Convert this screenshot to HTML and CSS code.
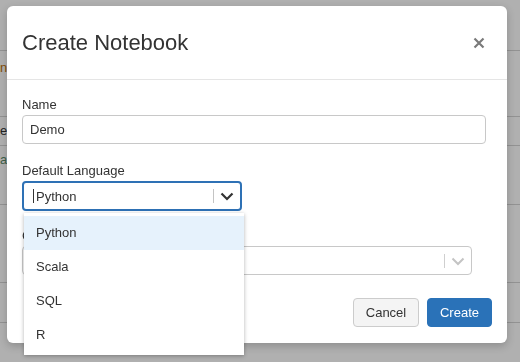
FILE: index.html
```html
<!DOCTYPE html>
<html lang="en">
<head>
    <meta charset="UTF-8">
    <meta name="viewport" content="width=device-width, initial-scale=1.0">
    <title>Create Notebook</title>
    <link rel="stylesheet" href="styles.css">
</head>
<body>
    <div class="page">
        <div class="page-row row-head"></div>
        <div class="page-row row-a"><span class="cell cell-orange">n</span></div>
        <div class="page-row row-b"><span class="cell">e</span></div>
        <div class="page-row row-c"><span class="cell cell-green">a</span></div>
        <div class="page-row row-d"></div>
        <div class="page-row row-e"></div>
    </div>
    <div class="backdrop"></div>

    <div class="modal">
        <div class="modal-header">
            <h4 class="modal-title">Create Notebook</h4>
            <svg class="close" width="12" height="12" viewBox="0 0 12 12">
                <path d="M1.5 1.5 L10.5 10.5 M10.5 1.5 L1.5 10.5" stroke="#7a7a7a" stroke-width="2.2"/>
            </svg>
        </div>

        <div class="modal-body">
            <div class="form-group group-name">
                <div class="label">Name</div>
                <div class="input">Demo</div>
            </div>

            <div class="form-group group-lang">
                <div class="label">Default Language</div>
                <div class="select select-focus">
                    <span class="select-value"><span class="caret-line"></span>Python</span>
                    <span class="select-sep"></span>
                    <svg class="chevron" width="14" height="10" viewBox="0 0 14 10">
                        <path d="M1.5 2.5 L7 8 L12.5 2.5" fill="none" stroke="#333" stroke-width="2.2"/>
                    </svg>
                </div>
                <div class="menu">
                    <div class="menu-item active">Python</div>
                    <div class="menu-item">Scala</div>
                    <div class="menu-item">SQL</div>
                    <div class="menu-item">R</div>
                </div>
            </div>

            <div class="form-group group-cluster">
                <div class="label">Cluster</div>
                <div class="select select-wide">
                    <span class="select-value"></span>
                    <span class="select-sep light"></span>
                    <svg class="chevron" width="14" height="10" viewBox="0 0 14 10">
                        <path d="M1.5 2.5 L7 8 L12.5 2.5" fill="none" stroke="#c4c4c4" stroke-width="2"/>
                    </svg>
                </div>
            </div>
        </div>

        <div class="modal-footer">
            <button class="btn btn-default">Cancel</button>
            <button class="btn btn-primary">Create</button>
        </div>
    </div>
</body>
</html>
```

FILE: styles.css
```css
body {
    margin: 0;
    font-family: "Liberation Sans", Arial, sans-serif;
    font-size: 13px;
    color: #333;
    background-color: #fff;
    overflow: hidden;
}

/* page behind the dialog */
.page {
    width: 520px;
    height: 362px;
}

.page-row {
    border-bottom: 1px solid #d4d4d4;
    box-sizing: border-box;
}

.row-head { height: 51px; }
.row-a { height: 66px; padding-top: 9px; }
.row-b { height: 29px; padding-top: 6px; }
.row-c { height: 59px; padding-top: 6px; }
.row-d { height: 78px; }
.row-e { height: 40px; }

.cell {
    display: block;
    font-size: 13px;
    line-height: 16px;
    color: #333;
}

.cell-orange { color: #c0720a; }
.cell-green { color: #5b8a6a; }

.backdrop {
    position: fixed;
    top: 0;
    left: 0;
    right: 0;
    bottom: 0;
    background-color: rgba(0, 0, 0, 0.31);
}

/* dialog */
.modal {
    position: absolute;
    top: 6px;
    left: 7px;
    width: 500px;
    height: 337px;
    background-color: #fff;
    border-radius: 6px;
    box-shadow: 0 3px 9px rgba(0, 0, 0, 0.2);
}

.modal-header {
    height: 74px;
    box-sizing: border-box;
    border-bottom: 1px solid #e5e5e5;
    display: flex;
    align-items: center;
    justify-content: space-between;
    padding: 0 22px 0 15px;
}

.modal-title {
    margin: 0;
    font-size: 22px;
    font-weight: normal;
    color: #333;
    line-height: 26px;
    padding-top: 1px;
}

.close {
    display: block;
    margin-top: 1px;
}

.modal-body {
    padding: 17px 15px 0 15px;
    position: relative;
}

.form-group {
    position: relative;
}

.label {
    line-height: 16px;
    margin-bottom: 2px;
    color: #333;
}

.group-name { margin-bottom: 19px; }
.group-lang { margin-bottom: 17px; }

.input {
    width: 464px;
    height: 29px;
    box-sizing: border-box;
    border: 1px solid #c8c8c8;
    border-radius: 4px;
    padding: 0 7px;
    line-height: 27px;
    color: #333;
}

.select {
    height: 29px;
    box-sizing: border-box;
    border: 1px solid #c8c8c8;
    border-radius: 4px;
    display: flex;
    align-items: center;
    padding: 0 6px 0 10px;
}

.select-focus {
    width: 220px;
    height: 30px;
    border: 2px solid #2e71b5;
    padding-left: 9px;
}

.select-wide {
    width: 450px;
}

.select-value {
    flex: 1;
    display: flex;
    align-items: center;
    color: #333;
}

.caret-line {
    display: inline-block;
    width: 1px;
    height: 14px;
    background-color: #333;
    margin-right: 2px;
}

.select-sep {
    width: 1px;
    height: 14px;
    background-color: #c4c4c4;
    margin-right: 6px;
}

.select-sep.light {
    background-color: #cfcfcf;
}

.chevron {
    display: block;
}

.menu {
    position: absolute;
    top: 50px;
    left: 2px;
    width: 220px;
    padding: 3px 0;
    background-color: #fff;
    box-shadow: 0 1px 4px rgba(0, 0, 0, 0.3);
    z-index: 2;
}

.menu-item {
    height: 34px;
    line-height: 34px;
    padding-left: 12px;
    color: #333;
}

.menu-item.active {
    background-color: #e6f2fc;
}

.modal-footer {
    position: absolute;
    right: 15px;
    bottom: 16px;
    display: flex;
    gap: 8px;
}

.btn {
    height: 29px;
    padding: 0 11px;
    border-radius: 4px;
    font-family: "Liberation Sans", Arial, sans-serif;
    font-size: 13px;
    line-height: 27px;
    border: 1px solid #ccc;
}

.btn-default {
    background-color: #f4f4f4;
    color: #333;
    width: 66px;
}

.btn-primary {
    background-color: #2a72b8;
    border-color: #2a72b8;
    color: #fff;
    width: 65px;
}
```
